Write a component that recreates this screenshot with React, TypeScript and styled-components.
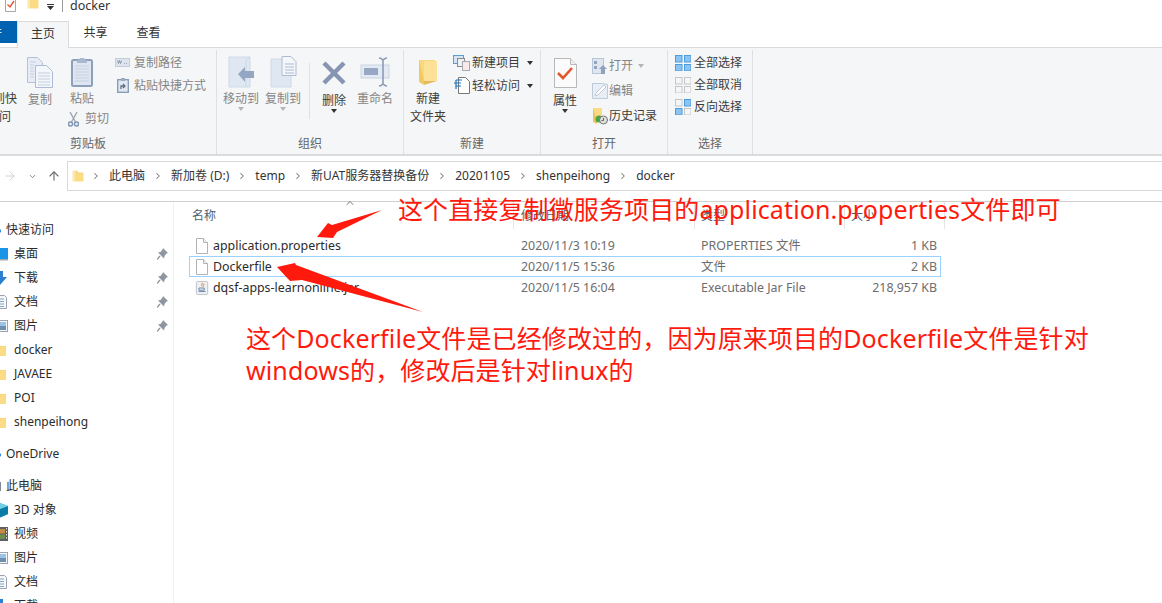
import React from "react";
import styled, { createGlobalStyle } from "styled-components";
import { ArrowRight, ArrowUp, ChevronDown, ChevronRight, ChevronUp } from "lucide-react";

const GlobalStyle = createGlobalStyle`
  html, body {
    margin: 0;
    padding: 0;
    background: #fff;
  }
  * {
    box-sizing: border-box;
  }
`;

const Page = styled.div`
  position: relative;
  display: flex;
  flex-direction: column;
  width: 1162px;
  height: 603px;
  overflow: hidden;
  background: #fff;
  color: #333;
  font-family: "Noto Sans", "Noto Sans CJK SC", sans-serif;
  font-size: 12px;
  line-height: 18px;
`;

const TitleBar = styled.div`
  display: flex;
  align-items: flex-start;
  height: 21px;
  padding-left: 5px;
  overflow: hidden;
`;

const TitleIcon = styled.span<{ $ml?: number; $mt?: number }>`
  display: flex;
  margin-top: ${(p) => p.$mt ?? -4}px;
  margin-left: ${(p) => p.$ml ?? 0}px;
`;

const TitleDivider = styled.span`
  width: 1px;
  height: 12px;
  margin-left: 8px;
  background: #999;
`;

const TitleText = styled.span`
  margin-left: 7px;
  margin-top: -3px;
  color: #333;
  font-size: 12.5px;
`;

const TabStrip = styled.div`
  display: flex;
  align-items: flex-start;
  height: 27px;
  border-bottom: 1px solid #dadbdc;
`;

const FileTab = styled.div`
  width: 43px;
  height: 22px;
  margin-left: -26px;
  padding-right: 15px;
  background: #0063b1;
  color: #fff;
  text-align: right;
  line-height: 24px;
  overflow: hidden;
  white-space: nowrap;
`;

const Tab = styled.div<{ $active?: boolean; $w: number }>`
  width: ${(p) => p.$w}px;
  height: ${(p) => (p.$active ? 27 : 24)}px;
  line-height: 24px;
  text-align: center;
  color: #333;
  background: ${(p) => (p.$active ? "#f5f6f7" : "transparent")};
  border: ${(p) => (p.$active ? "1px solid #dadbdc" : "none")};
  border-bottom: none;
`;

const Ribbon = styled.div`
  display: flex;
  height: 108px;
  background: #f5f6f7;
  border-bottom: 2px solid #dadbdc;
  padding-top: 2px;
`;

const Group = styled.div<{ $w: number }>`
  display: flex;
  flex-direction: column;
  flex: none;
  width: ${(p) => p.$w}px;
  height: 104px;
  border-right: 1px solid #dfe0e1;
`;

const GroupBody = styled.div<{ $pl?: number }>`
  display: flex;
  flex: 1;
  padding-top: 4px;
  padding-left: ${(p) => p.$pl ?? 0}px;
`;

const GroupLabel = styled.div<{ $shift?: number }>`
  height: 19px;
  text-align: center;
  color: #666;
  transform: translateX(${(p) => p.$shift ?? 0}px);
`;

const LargeButton = styled.div<{ $w?: number; $dim?: boolean; $ml?: number }>`
  display: flex;
  flex-direction: column;
  align-items: center;
  flex: none;
  width: ${(p) => p.$w ?? 40}px;
  margin-left: ${(p) => p.$ml ?? 0}px;
  color: ${(p) => (p.$dim ? "#858585" : "#3c3c3c")};
  text-align: center;
`;

const LargeIcon = styled.span<{ $h?: number }>`
  display: flex;
  align-items: center;
  justify-content: center;
  height: ${(p) => p.$h ?? 36}px;
`;

const Caret = styled.span<{ $dim?: boolean }>`
  width: 0;
  height: 0;
  margin-top: -1px;
  border-left: 3.5px solid transparent;
  border-right: 3.5px solid transparent;
  border-top: 4px solid ${(p) => (p.$dim ? "#b5b5b5" : "#333")};
`;

const InlineCaret = styled(Caret)<{ $ml: number }>`
  margin-top: 0;
  margin-left: ${(p) => p.$ml}px;
`;

const GroupDivider = styled.span`
  align-self: flex-start;
  flex: none;
  width: 1px;
  height: 56px;
  margin: 9px 4px 0 6px;
  background: #dfe0e1;
`;

const SmallColumn = styled.div<{ $ml: number; $rowH: number; $mt?: number }>`
  display: flex;
  flex-direction: column;
  margin-left: ${(p) => p.$ml}px;
  margin-top: ${(p) => p.$mt ?? 0}px;
  & > * {
    height: ${(p) => p.$rowH}px;
  }
`;

const SmallRow = styled.div<{ $dim?: boolean; $gap?: number }>`
  display: flex;
  align-items: center;
  gap: ${(p) => p.$gap ?? 3}px;
  white-space: nowrap;
  color: ${(p) => (p.$dim ? "#858585" : "#3c3c3c")};
`;

const SmallIcon = styled.span<{ $w: number }>`
  display: flex;
  justify-content: center;
  flex: none;
  width: ${(p) => p.$w}px;
`;

const PasteColumn = styled.div`
  display: flex;
  flex-direction: column;
  flex: none;
  width: 40px;
  margin-left: 2px;
`;

const CutRow = styled(SmallRow)`
  margin: 2px 0 0 6px;
  width: 60px;
`;

const AddressRow = styled.div`
  display: flex;
  align-items: center;
  height: 30px;
  margin-top: 5px;
`;

const NavIcons = styled.div`
  display: flex;
  align-items: center;
  flex: none;
  width: 67px;
  padding-left: 3px;
`;

const NavDown = styled(ChevronDown)`
  margin-left: 11px;
`;

const NavUp = styled(ArrowUp)`
  margin-left: 10px;
`;

const AddressBar = styled.div`
  display: flex;
  align-items: center;
  flex: 1;
  height: 30px;
  padding-left: 3px;
  gap: 8px;
  border: 1px solid #d9d9d9;
  border-right: none;
  color: #333;
  white-space: nowrap;
`;

const AddressFolder = styled.span`
  display: flex;
  margin-right: -2px;
`;

const Crumb = styled.span``;

const Main = styled.div`
  display: flex;
  flex: 1;
  min-height: 0;
  margin-top: 10px;
  border-top: 1px solid #cfcfcf;
`;

const Sidebar = styled.nav`
  flex: none;
  width: 174px;
  padding-top: 16px;
  border-right: 1px solid #f0f0f0;
`;

const SideRow = styled.div<{ $section?: boolean; $after?: number }>`
  display: flex;
  align-items: center;
  height: 24px;
  margin-left: ${(p) => (p.$section ? -15 : -8)}px;
  margin-top: ${(p) => p.$after ?? 0}px;
  padding-right: 5px;
  gap: ${(p) => (p.$section ? 5 : 6)}px;
  color: #2b2b2b;
  white-space: nowrap;
`;

const PinSlot = styled.span`
  display: flex;
  margin-left: auto;
`;

const FileArea = styled.div`
  flex: 1;
  padding-left: 15px;
`;

const HeaderRow = styled.div`
  display: grid;
  grid-template-columns: 325px 181px 150px 100px;
  height: 27px;
  color: #4f5f70;
`;

const HeaderCell = styled.div<{ $pl: number }>`
  position: relative;
  padding-left: ${(p) => p.$pl}px;
  padding-top: 5px;
  height: 27px;
  border-right: 1px solid #e5e5e5;
`;

const SortMark = styled.span`
  position: absolute;
  top: -5px;
  left: 155px;
  display: flex;
  color: #555;
`;

const FileList = styled.div`
  display: flex;
  flex-direction: column;
  margin-top: 6px;
`;

const FileRow = styled.div<{ $selected?: boolean }>`
  display: grid;
  grid-template-columns: 325px 181px 150px 96px;
  align-items: center;
  width: 752px;
  height: 21px;
  border: 1px solid ${(p) => (p.$selected ? "#99d1ff" : "transparent")};
  color: #6d6d6d;
  font-size: 12.4px;
`;

const NameCell = styled.div`
  display: flex;
  align-items: center;
  gap: 4px;
  padding-left: 5px;
  color: #2b2b2b;
  white-space: nowrap;
`;

const NameIcon = styled.span`
  display: flex;
  justify-content: center;
  flex: none;
  width: 14px;
`;

const DateCell = styled.div`
  padding-left: 6px;
`;

const TypeCell = styled.div`
  padding-left: 5px;
`;

const SizeCell = styled.div`
  padding-right: 5px;
  text-align: right;
  white-space: nowrap;
`;

const Note = styled.div<{ $x: number; $y: number }>`
  position: absolute;
  left: ${(p) => p.$x}px;
  top: ${(p) => p.$y}px;
  color: #ff1a0d;
  font-family: "Noto Sans", "Noto Sans CJK SC", sans-serif;
  font-size: 25px;
  line-height: 32px;
  letter-spacing: 0.12px;
  white-space: nowrap;
`;

const ArrowLayer = styled.svg`
  position: absolute;
  inset: 0;
  pointer-events: none;
`;

const FolderIcon = ({ size = 16 }: { size?: number }) => (
  <svg width={size} height={size} viewBox="0 0 16 16">
    <path d="M2 2h5l1.5 2H14v10H2z" fill="#f5d67f" />
    <path d="M2 2h3v12H2z" fill="#ffe9a6" />
    <path d="M5 14l1-9h8v9z" fill="#fbdc85" />
  </svg>
);

const RibbonFolder = () => (
  <svg width="20" height="28" viewBox="0 0 20 28">
    <path d="M1 2l5 1v24l-5-3z" fill="#f2c85f" />
    <path d="M1 2h16v20H6z" fill="#f7d77f" />
    <path d="M6 3h13v20H6z" fill="#fde197" />
    <path d="M6 23h13l-13 4z" fill="#e5bc5c" />
  </svg>
);

const PageIcon = () => (
  <svg width="14" height="16" viewBox="0 0 14 16">
    <path d="M1.5.5h7l4 4v11h-11z" fill="#fff" stroke="#b3b3b3" />
    <path d="M8.5.5v4h4" fill="#f2f2f2" stroke="#b3b3b3" />
  </svg>
);

const JarIcon = () => (
  <svg width="16" height="16" viewBox="0 0 16 16">
    <rect x="1.5" y="0.5" width="13" height="15" rx="1.5" fill="#eef0f3" stroke="#b8bcc2" />
    <path d="M8 2c1 1.5-1.5 2.5 0 4M10 3c1 1-1.5 2-.5 3.5" stroke="#d9762b" fill="none" />
    <path d="M4.5 8h6v2.5h-6zM4 12h8" stroke="#5b7fa6" fill="none" />
  </svg>
);

const PinIcon = () => (
  <svg width="11" height="12" viewBox="0 0 11 12">
    <path d="M6 0l5 5-1.5.5L7.5 8 7 10.5 1 4.5 3.5 4 5.5 1.5z" fill="#8e979f" />
    <path d="M3 8L0 11.5" stroke="#8e979f" strokeWidth="1.4" />
  </svg>
);

const CopyIcon = () => (
  <svg width="26" height="31" viewBox="0 0 26 31">
    <path d="M.5.5h10l5 5v20H.5z" fill="#e8edf5" stroke="#b4c2d8" />
    <path d="M8.5 8.5h11l6 6v16h-17z" fill="#f3f6fa" stroke="#aebcd3" />
    <path d="M11 16h12M11 19h12M11 22h12M11 25h12M11 28h12M3 5h6M3 8h4M3 11h4M3 14h4M3 17h4M3 20h4" stroke="#c3cfdf" />
  </svg>
);

const PasteIcon = () => (
  <svg width="22" height="30" viewBox="0 0 22 30">
    <rect x="1" y="3" width="20" height="26" rx="1.5" fill="#dfe6f1" stroke="#8c9fbb" strokeWidth="2" />
    <path d="M8 3l1-2h4l1 2h2v3H6V3z" fill="#a9b8cd" />
    <path d="M4 9h14M4 12h14M4 15h14M4 18h14M4 21h14M4 24h14" stroke="#c6d1e1" />
  </svg>
);

const ScissorsIcon = () => (
  <svg width="11" height="15" viewBox="0 0 11 15">
    <path d="M2 0l5.5 10M9 0L3.5 10" stroke="#9aa3ad" strokeWidth="1.3" fill="none" />
    <circle cx="2.5" cy="12" r="2" fill="none" stroke="#7f95b3" strokeWidth="1.5" />
    <circle cx="8.5" cy="12" r="2" fill="none" stroke="#7f95b3" strokeWidth="1.5" />
  </svg>
);

const PathIcon = () => (
  <svg width="15" height="11" viewBox="0 0 15 11">
    <rect x="0.5" y="1.5" width="14" height="8" fill="#dde4ee" stroke="#c4cedb" />
    <path d="M2.5 3.5l1 3 1-3 1 3 1-3M9 6.5h.8M11 6.5h.8" stroke="#7b8698" fill="none" strokeWidth=".8" />
  </svg>
);

const ShortcutIcon = () => (
  <svg width="12" height="15" viewBox="0 0 12 15">
    <rect x="0.7" y="1.7" width="10.6" height="12.6" fill="#e2e8f1" stroke="#8497b3" strokeWidth="1.3" />
    <path d="M4 0h4v3H4z" fill="#9aaac0" />
    <path d="M4 11V8h3M6 6l2 2-2 2" stroke="#5d6f87" strokeWidth="1.3" fill="none" />
  </svg>
);

const MoveToIcon = () => (
  <svg width="27" height="32" viewBox="0 0 27 32">
    <path d="M1 1h21v30H1z" fill="#dfe7f3" stroke="#cfd9e8" />
    <path d="M22 1l-4 3v27" fill="none" stroke="#cbd6e6" />
    <path d="M10 18l7-7v4h9v7h-9v4z" fill="#93a6c2" />
  </svg>
);

const CopyToIcon = () => (
  <svg width="27" height="32" viewBox="0 0 27 32">
    <path d="M1 3h20v28H1z" fill="#dfe7f3" stroke="#cfd9e8" />
    <path d="M12 .5h9l5 5v14H12z" fill="#f4f6fa" stroke="#aebcd3" />
    <path d="M15 8h9M15 11h9M15 14h9M15 17h9" stroke="#aebcd3" />
  </svg>
);

const DeleteIcon = () => (
  <svg width="26" height="26" viewBox="0 0 26 26">
    <path d="M3 3l20 20M23 3L3 23" stroke="#8695b2" strokeWidth="4.5" />
  </svg>
);

const RenameIcon = () => (
  <svg width="31" height="30" viewBox="0 0 31 30">
    <rect x="1" y="8" width="28" height="13" fill="#e4eaf3" stroke="#c9d3e2" />
    <rect x="4" y="11" width="14" height="7" fill="#96a8c4" />
    <path d="M19 1c2 0 3 1 4 2 1-1 2-2 4-2M23 3v24M19 29c2 0 3-1 4-2 1 1 2 2 4 2" stroke="#8b9cb8" strokeWidth="1.6" fill="none" />
  </svg>
);

const NewItemIcon = () => (
  <svg width="17" height="16" viewBox="0 0 17 16">
    <rect x="0.5" y="0.5" width="10" height="8" fill="#d6e4f3" stroke="#5d9ccc" />
    <rect x="4.5" y="3.5" width="7" height="8" fill="#eef0f3" stroke="#8a8a8a" />
    <rect x="9.5" y="6.5" width="7" height="9" fill="#f7e9ea" stroke="#a8a8b0" />
  </svg>
);

const EasyAccessIcon = () => (
  <svg width="17" height="17" viewBox="0 0 17 17">
    <path d="M5.5.5h7l4 4v12h-11z" fill="#fff" stroke="#777" />
    <path d="M3 3h6M1 6h7M3 9h5" stroke="#1e72bd" strokeWidth="1.2" />
    <path d="M3 3v9" stroke="#1e72bd" strokeWidth="1.2" />
  </svg>
);

const PropertiesIcon = () => (
  <svg width="23" height="30" viewBox="0 0 23 30">
    <path d="M.5.5h16l6 6v23H.5z" fill="#fbfbfb" stroke="#b8b8b8" />
    <path d="M16.5.5v6h6" fill="#eee" stroke="#b8b8b8" />
    <path d="M4 15l5 5 9-10" stroke="#e2582a" strokeWidth="2.6" fill="none" />
  </svg>
);

const OpenIcon = () => (
  <svg width="16" height="16" viewBox="0 0 16 16">
    <rect x="0.5" y="0.5" width="11" height="15" fill="#dfe6f0" stroke="#b9c6d8" />
    <path d="M2 3h3v3H2zM2 8h3v3H2z" fill="#94a6bf" />
    <path d="M11 7l4 4h-2v5H9v-5H7z" fill="#8fa1bd" />
  </svg>
);

const EditIcon = () => (
  <svg width="16" height="16" viewBox="0 0 16 16">
    <path d="M.5.5h10l5 1v14H.5z" fill="#e9eef5" stroke="#bccadb" />
    <path d="M3 13l1-3 8-8 2 2-8 8z" fill="#fff" stroke="#bccadb" />
  </svg>
);

const HistoryIcon = () => (
  <svg width="16" height="18" viewBox="0 0 16 18">
    <path d="M1 1l4 1v15l-4-2z" fill="#eec35a" />
    <path d="M1 1h9v12H5z" fill="#fbdc85" />
    <circle cx="7" cy="12" r="3.5" fill="#4aa544" />
    <circle cx="11.5" cy="13" r="4" fill="#dedede" stroke="#777" />
    <path d="M11.5 11v2.5h-2" stroke="#666" fill="none" />
  </svg>
);

const GridIcon = ({ on }: { on: boolean[] }) => (
  <svg width="16" height="16" viewBox="0 0 16 16">
    {[
      [0, 0],
      [9, 0],
      [0, 9],
      [9, 9],
    ].map(([x, y], i) => (
      <rect
        key={i}
        x={x + 0.5}
        y={y + 0.5}
        width="6.5"
        height="6.5"
        fill={on[i] ? "#8bc4f3" : "#f5f6f7"}
        stroke={on[i] ? "#4d9cdc" : "#c6c6c6"}
      />
    ))}
  </svg>
);

const DesktopIcon = () => (
  <svg width="16" height="16" viewBox="0 0 16 16">
    <rect x="0" y="2" width="16" height="11" fill="#1a94e6" />
    <rect x="0" y="13" width="16" height="1.5" fill="#a3a9b0" />
  </svg>
);

const DownloadIcon = () => (
  <svg width="16" height="16" viewBox="0 0 16 16">
    <path d="M5 1h6v6h4l-7 8-7-8h4z" fill="#2a7fd0" />
  </svg>
);

const DocsIcon = () => (
  <svg width="16" height="16" viewBox="0 0 16 16">
    <path d="M1.5 1.5h11l2 2v11h-13z" fill="#f6f7f9" stroke="#9aa5b3" />
    <path d="M4 5h8M4 7.5h8M4 10h8M4 12.5h8" stroke="#8aa6c7" />
  </svg>
);

const PicturesIcon = () => (
  <svg width="16" height="16" viewBox="0 0 16 16">
    <rect x="0.5" y="2.5" width="15" height="11" fill="#f4f6f8" stroke="#9aa5b3" />
    <rect x="2" y="4" width="12" height="4" fill="#9cc4e6" />
    <rect x="2" y="8" width="12" height="4" fill="#6f8fae" />
  </svg>
);

const CloudIcon = () => (
  <svg width="16" height="16" viewBox="0 0 16 16">
    <ellipse cx="8" cy="9" rx="8" ry="4" fill="#1a7fd0" />
  </svg>
);

const ComputerIcon = () => (
  <svg width="16" height="16" viewBox="0 0 16 16">
    <rect x="0" y="4" width="16" height="9" fill="#7f8a96" />
  </svg>
);

const CubeIcon = () => (
  <svg width="16" height="16" viewBox="0 0 16 16">
    <path d="M8 1l8 3v8l-8 3.5L0 12V4z" fill="#1fa0c9" />
    <path d="M8 7l8-3v8l-8 3.5z" fill="#0b7ca6" />
    <path d="M8 1l8 3-8 3-8-3z" fill="#6fd0e8" />
  </svg>
);

const VideoIcon = () => (
  <svg width="16" height="16" viewBox="0 0 16 16">
    <rect x="0" y="1" width="16" height="14" fill="#5b5f66" />
    <rect x="3" y="3" width="10" height="4.5" fill="#c58b3c" />
    <rect x="3" y="8.5" width="10" height="4.5" fill="#6b8f4a" />
    <path d="M1.5 2v12M14.5 2v12" stroke="#ddd" strokeDasharray="1.5 1.5" />
  </svg>
);

const LittleCheckDoc = () => (
  <svg width="11" height="16" viewBox="0 0 11 16">
    <path d="M.5.5h10v15H.5z" fill="#fff" stroke="#a8a8a8" />
    <path d="M2.5 8.5L5 11l4-6" stroke="#e2582a" strokeWidth="1.4" fill="none" />
  </svg>
);

const TitleDropdown = () => (
  <svg width="7" height="6" viewBox="0 0 7 6">
    <path d="M0 .5h7" stroke="#333" />
    <path d="M0 2h7L3.5 6z" fill="#333" />
  </svg>
);

const quickItems = [
  { label: "桌面", icon: <DesktopIcon />, pinned: true },
  { label: "下载", icon: <DownloadIcon />, pinned: true },
  { label: "文档", icon: <DocsIcon />, pinned: true },
  { label: "图片", icon: <PicturesIcon />, pinned: true },
  { label: "docker", icon: <FolderIcon /> },
  { label: "JAVAEE", icon: <FolderIcon /> },
  { label: "POI", icon: <FolderIcon /> },
  { label: "shenpeihong", icon: <FolderIcon /> },
];

const pcItems = [
  { label: "3D 对象", icon: <CubeIcon /> },
  { label: "视频", icon: <VideoIcon /> },
  { label: "图片", icon: <PicturesIcon /> },
  { label: "文档", icon: <DocsIcon /> },
  { label: "下载", icon: <DownloadIcon /> },
];

const crumbs = ["此电脑", "新加卷 (D:)", "temp", "新UAT服务器替换备份", "20201105", "shenpeihong", "docker"];

const files = [
  { name: "application.properties", date: "2020/11/3 10:19", type: "PROPERTIES 文件", size: "1 KB", icon: <PageIcon /> },
  { name: "Dockerfile", date: "2020/11/5 15:36", type: "文件", size: "2 KB", icon: <PageIcon />, selected: true },
  { name: "dqsf-apps-learnonline.jar", date: "2020/11/5 16:04", type: "Executable Jar File", size: "218,957 KB", icon: <JarIcon /> },
];

const App = () => {
  return (
    <Page>
      <GlobalStyle />
      <TitleBar>
        <TitleIcon>
          <LittleCheckDoc />
        </TitleIcon>
        <TitleIcon $ml={10}>
          <FolderIcon size={14} />
        </TitleIcon>
        <TitleIcon $ml={7} $mt={4}>
          <TitleDropdown />
        </TitleIcon>
        <TitleDivider />
        <TitleText>docker</TitleText>
      </TitleBar>

      <TabStrip>
        <FileTab>文件</FileTab>
        <Tab $active $w={52}>主页</Tab>
        <Tab $w={53}>共享</Tab>
        <Tab $w={53}>查看</Tab>
      </TabStrip>

      <Ribbon>
        <Group $w={217}>
          <GroupBody>
            <LargeButton $w={48} $ml={-31}>
              <LargeIcon />
              固定到快速访问
            </LargeButton>
            <LargeButton $dim $w={40} $ml={3}>
              <LargeIcon $h={37}>
                <CopyIcon />
              </LargeIcon>
              复制
            </LargeButton>
            <PasteColumn>
              <LargeButton $dim>
                <LargeIcon>
                  <PasteIcon />
                </LargeIcon>
                粘贴
              </LargeButton>
              <CutRow $dim $gap={6}>
                <ScissorsIcon />
                剪切
              </CutRow>
            </PasteColumn>
            <SmallColumn $ml={13} $rowH={23} $mt={-3}>
              <SmallRow $dim $gap={4}>
                <SmallIcon $w={15}>
                  <PathIcon />
                </SmallIcon>
                复制路径
              </SmallRow>
              <SmallRow $dim $gap={4}>
                <SmallIcon $w={15}>
                  <ShortcutIcon />
                </SmallIcon>
                粘贴快捷方式
              </SmallRow>
            </SmallColumn>
          </GroupBody>
          <GroupLabel $shift={-20}>剪贴板</GroupLabel>
        </Group>

        <Group $w={187}>
          <GroupBody $pl={4}>
            <LargeButton $dim>
              <LargeIcon>
                <MoveToIcon />
              </LargeIcon>
              移动到
              <Caret $dim />
            </LargeButton>
            <LargeButton $dim $ml={2}>
              <LargeIcon>
                <CopyToIcon />
              </LargeIcon>
              复制到
              <Caret $dim />
            </LargeButton>
            <GroupDivider />
            <LargeButton>
              <LargeIcon $h={38}>
                <DeleteIcon />
              </LargeIcon>
              删除
              <Caret />
            </LargeButton>
            <LargeButton $dim $ml={1}>
              <LargeIcon>
                <RenameIcon />
              </LargeIcon>
              重命名
            </LargeButton>
          </GroupBody>
          <GroupLabel>组织</GroupLabel>
        </Group>

        <Group $w={137}>
          <GroupBody $pl={4}>
            <LargeButton>
              <LargeIcon>
                <RibbonFolder />
              </LargeIcon>
              新建
              <br />
              文件夹
            </LargeButton>
            <SmallColumn $ml={5} $rowH={23} $mt={-3}>
              <SmallRow $gap={2}>
                <SmallIcon $w={17}>
                  <NewItemIcon />
                </SmallIcon>
                新建项目
                <InlineCaret $ml={5} />
              </SmallRow>
              <SmallRow $gap={2}>
                <SmallIcon $w={17}>
                  <EasyAccessIcon />
                </SmallIcon>
                轻松访问
                <InlineCaret $ml={5} />
              </SmallRow>
            </SmallColumn>
          </GroupBody>
          <GroupLabel>新建</GroupLabel>
        </Group>

        <Group $w={127}>
          <GroupBody $pl={4}>
            <LargeButton>
              <LargeIcon $h={38}>
                <PropertiesIcon />
              </LargeIcon>
              属性
              <Caret />
            </LargeButton>
            <SmallColumn $ml={7} $rowH={25} $mt={-1}>
              <SmallRow $dim $gap={1}>
                <SmallIcon $w={16}>
                  <OpenIcon />
                </SmallIcon>
                打开
                <InlineCaret $dim $ml={4} />
              </SmallRow>
              <SmallRow $dim $gap={1}>
                <SmallIcon $w={16}>
                  <EditIcon />
                </SmallIcon>
                编辑
              </SmallRow>
              <SmallRow $gap={1}>
                <SmallIcon $w={16}>
                  <HistoryIcon />
                </SmallIcon>
                历史记录
              </SmallRow>
            </SmallColumn>
          </GroupBody>
          <GroupLabel>打开</GroupLabel>
        </Group>

        <Group $w={85}>
          <GroupBody $pl={7}>
            <SmallColumn $ml={0} $rowH={22} $mt={-2}>
              <SmallRow $gap={3}>
                <GridIcon on={[true, true, true, true]} />
                全部选择
              </SmallRow>
              <SmallRow $gap={3}>
                <GridIcon on={[false, false, false, false]} />
                全部取消
              </SmallRow>
              <SmallRow $gap={3}>
                <GridIcon on={[false, true, true, false]} />
                反向选择
              </SmallRow>
            </SmallColumn>
          </GroupBody>
          <GroupLabel>选择</GroupLabel>
        </Group>
      </Ribbon>

      <AddressRow>
        <NavIcons>
          <ArrowRight size={14} color="#cfcfcf" strokeWidth={1.6} />
          <NavDown size={9} color="#888" strokeWidth={2.5} />
          <NavUp size={14} color="#6b6b6b" strokeWidth={2} />
        </NavIcons>
        <AddressBar>
          <AddressFolder>
            <FolderIcon size={14} />
          </AddressFolder>
          {crumbs.map((crumb) => (
            <React.Fragment key={crumb}>
              <ChevronRight size={10} color="#7a7a7a" strokeWidth={2.5} />
              <Crumb>{crumb}</Crumb>
            </React.Fragment>
          ))}
        </AddressBar>
      </AddressRow>

      <Main>
        <Sidebar>
          <SideRow $section>
            <CloudIcon />
            快速访问
          </SideRow>
          {quickItems.map((item) => (
            <SideRow key={item.label}>
              {item.icon}
              {item.label}
              {item.pinned && (
                <PinSlot>
                  <PinIcon />
                </PinSlot>
              )}
            </SideRow>
          ))}
          <SideRow $section $after={8}>
            <CloudIcon />
            OneDrive
          </SideRow>
          <SideRow $section $after={8}>
            <ComputerIcon />
            此电脑
          </SideRow>
          {pcItems.map((item) => (
            <SideRow key={item.label}>
              {item.icon}
              {item.label}
            </SideRow>
          ))}
        </Sidebar>

        <FileArea>
          <HeaderRow>
            <HeaderCell $pl={3}>
              名称
              <SortMark>
                <ChevronUp size={12} strokeWidth={1.6} />
              </SortMark>
            </HeaderCell>
            <HeaderCell $pl={7}>修改日期</HeaderCell>
            <HeaderCell $pl={6}>类型</HeaderCell>
            <HeaderCell $pl={6}>大小</HeaderCell>
          </HeaderRow>
          <FileList>
            {files.map((file) => (
              <FileRow key={file.name} $selected={file.selected}>
                <NameCell>
                  <NameIcon>{file.icon}</NameIcon>
                  {file.name}
                </NameCell>
                <DateCell>{file.date}</DateCell>
                <TypeCell>{file.type}</TypeCell>
                <SizeCell>{file.size}</SizeCell>
              </FileRow>
            ))}
          </FileList>
        </FileArea>
      </Main>

      <ArrowLayer width="1162" height="603" viewBox="0 0 1162 603">
        <polygon points="382,210 337,232 333,238 317,237 328,223 332,225" fill="#ff1a0d" />
        <polygon points="423,312 302,280 290,281 277,267 295,263 296,265" fill="#ff1a0d" />
      </ArrowLayer>
      <Note $x={398} $y={193}>这个直接复制微服务项目的application.properties文件即可</Note>
      <Note $x={246} $y={322}>
        这个Dockerfile文件是已经修改过的，因为原来项目的Dockerfile文件是针对
        <br />
        windows的，修改后是针对linux的
      </Note>
    </Page>
  );
};

export default App;
